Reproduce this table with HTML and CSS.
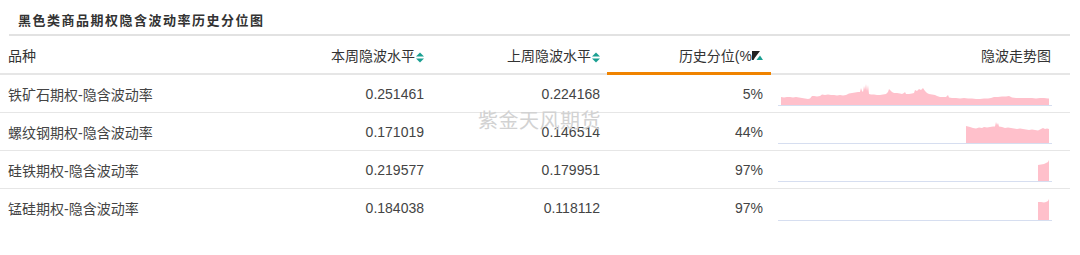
FILE: index.html
```html
<!DOCTYPE html>
<html lang="zh">
<head>
<meta charset="utf-8">
<link rel="stylesheet" href="styles.css">
</head>
<body>
<div class="panel">
  <div class="title">黑色类商品期权隐含波动率历史分位图</div>
  <div class="table">
    <div class="row head">
      <div class="cell c1">品种</div>
      <div class="cell c2">本周隐波水平<svg class="sort" width="8" height="11" viewBox="0 0 8 11"><polygon points="0,4.5 4,0.5 8,4.5" /><polygon points="0,6.5 4,10.5 8,6.5" /></svg></div>
      <div class="cell c3">上周隐波水平<svg class="sort" width="8" height="11" viewBox="0 0 8 11"><polygon points="0,4.5 4,0.5 8,4.5" /><polygon points="0,6.5 4,10.5 8,6.5" /></svg></div>
      <div class="cell c4 active">历史分位(%<svg class="filt" width="11" height="10" viewBox="0 0 11 10"><polygon class="blk" points="0,0 8,0 3,6.5 1.5,9 0,9" /><polygon class="tl" points="4.5,9 8,4.5 11,9" /></svg></div>
      <div class="cell c5">隐波走势图</div>
    </div>
    <div class="row">
      <div class="cell c1">铁矿石期权-隐含波动率</div>
      <div class="cell c2">0.251461</div>
      <div class="cell c3">0.224168</div>
      <div class="cell c4">5%</div>
      <div class="cell c5 spark"><svg width="274" height="30" viewBox="0 0 274 30"><path class="area" d="M3,29 L3,21 6,21.5 9,21 12,21 15,21.5 18,21 21,21.5 24,22 27,22.5 30,23 32,22.5 34,20 36,20 39,20.5 42,20 44,18.5 47,19 50,18.5 53,19 56,19 59,19.5 62,19 65,19.5 68,19 71,17.5 74,17 77,16.5 80,16 82,16 83,12 84,15 85,16 86,10 87,14 88,8 89,15 90,9 91,18 93,18.5 96,18.5 99,19 102,19 105,18.5 108,18 110,16 111,13 112,14 114,16 116,17 119,17 122,17.5 124,18 126,17 127,16 128,18 131,18 134,17.5 136,17 137,14 139,15 141,13 143,14 145,12 147,15 149,17 151,18 154,18.5 157,19 159,20 162,21 165,21 168,21 170,19 171,21.5 174,22 178,22 182,22.5 186,22 190,22.5 194,22.5 198,23 202,23 206,22.5 210,22.5 213,22 216,21 220,21 224,20.5 228,20.5 231,20 233,21 234,21.5 238,22 242,22 246,22 250,22 254,22 258,22.5 262,22 266,22 270,22.5 271,22.5 271,29 Z"/><line class="base" x1="0" y1="29.5" x2="274" y2="29.5"/></svg></div>
    </div>
    <div class="row">
      <div class="cell c1">螺纹钢期权-隐含波动率</div>
      <div class="cell c2">0.171019</div>
      <div class="cell c3">0.146514</div>
      <div class="cell c4">44%</div>
      <div class="cell c5 spark"><svg width="274" height="30" viewBox="0 0 274 30"><path class="area" d="M188,29 L188,12 190,12.5 192,13 195,14 198,14.5 201,13.5 204,14 206,13 209,13.5 212,13 215,12.5 217,12.5 218,8 219,11 220,9 221,12.5 224,13 227,14 230,13.5 233,14 236,14.5 239,15 242,14.5 245,15 248,15.5 251,16 254,15.5 257,16 260,16.5 263,15 265,14 267,15 269,14.5 271,15 271,29 Z"/><line class="base" x1="0" y1="29.5" x2="274" y2="29.5"/></svg></div>
    </div>
    <div class="row">
      <div class="cell c1">硅铁期权-隐含波动率</div>
      <div class="cell c2">0.219577</div>
      <div class="cell c3">0.179951</div>
      <div class="cell c4">97%</div>
      <div class="cell c5 spark"><svg width="274" height="30" viewBox="0 0 274 30"><path class="area" d="M260,29 L260,13 263,12.5 266,12 268,11 270,10 271,8 271,29 Z"/><line class="base" x1="0" y1="29.5" x2="274" y2="29.5"/></svg></div>
    </div>
    <div class="row last">
      <div class="cell c1">锰硅期权-隐含波动率</div>
      <div class="cell c2">0.184038</div>
      <div class="cell c3">0.118112</div>
      <div class="cell c4">97%</div>
      <div class="cell c5 spark"><svg width="274" height="30" viewBox="0 0 274 30"><path class="area" d="M260,29 L260,11 263,11 266,11.5 268,11 270,10 271,8 271,29 Z"/><line class="base" x1="0" y1="29.5" x2="274" y2="29.5"/></svg></div>
    </div>
    <div class="watermark">紫金天风期货</div>
  </div>
</div>
</body>
</html>
```
FILE: styles.css
```css
html, body {
  margin: 0;
  padding: 0;
  background: #fff;
}
body {
  font-family: "Liberation Sans", "Noto Sans CJK SC", sans-serif;
  font-size: 14px;
  color: #444;
}
.panel {
  width: 1070px;
}
.title {
  margin-left: 9px;
  padding-left: 9px;
  border-bottom: 2px solid #e2e2e2;
  font-family: "Noto Sans CJK SC", sans-serif;
  font-weight: 700;
  font-size: 13px;
  letter-spacing: 1.5px;
  line-height: 40px;
  color: #333;
  box-sizing: border-box;
  height: 36px;
}
.table {
  position: relative;
  margin-top: 1px;
}
.row {
  display: grid;
  grid-template-columns: 260px 171px 176px 164px 299px;
  height: 38px;
  border-bottom: 1px solid #e6e6e6;
  box-sizing: border-box;
}
.row.last {
  border-bottom: none;
}
.row.head {
  height: 38px;
  border-bottom: none;
  color: #333;
}
.cell {
  display: flex;
  align-items: center;
  white-space: nowrap;
}
.head .cell {
  border-bottom: 2px solid #e6e6e6;
}
.head .cell.active {
  border-bottom: 3px solid #f08300;
}
.c1 {
  padding-left: 8px;
}
.c2, .c3 {
  justify-content: flex-end;
  padding-right: 7px;
}
.c4 {
  justify-content: flex-end;
  padding-right: 8px;
}
.c5 {
  justify-content: flex-end;
  padding-right: 19px;
}
.c5.spark {
  justify-content: flex-start;
  align-items: flex-end;
  padding-left: 7px;
  padding-right: 0;
  padding-bottom: 6px;
}
.spark svg {
  display: block;
}
.area {
  fill: #ffc0cb;
}
.base {
  stroke: #d6def0;
  stroke-width: 1;
}
.sort {
  margin-left: 1px;
  margin-top: 5px;
  fill: #1a9f92;
}
.filt {
  margin-left: 0;
  margin-top: 2px;
}
.filt .blk {
  fill: #222;
}
.filt .tl {
  fill: #1a9f92;
}
.watermark {
  position: absolute;
  left: 478px;
  top: 68px;
  font-family: "Noto Sans CJK SC", sans-serif;
  font-size: 20px;
  color: #d2d2d2;
  letter-spacing: 0.5px;
  pointer-events: none;
}
```
